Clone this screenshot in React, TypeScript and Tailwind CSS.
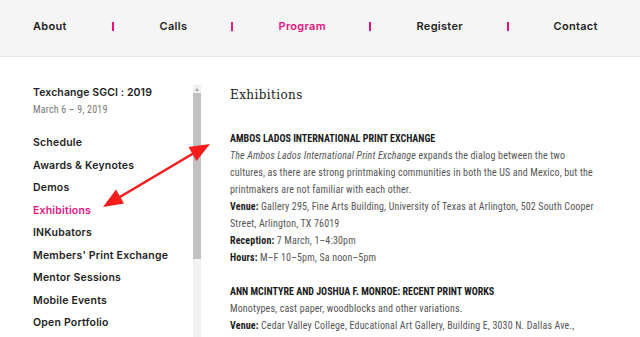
import React from 'react';

const navItems = [
  { label: 'About', active: false },
  { label: 'Calls', active: false },
  { label: 'Program', active: true },
  { label: 'Register', active: false },
  { label: 'Contact', active: false },
];

const sideLinks = [
  'Schedule',
  'Awards & Keynotes',
  'Demos',
  'Exhibitions',
  'INKubators',
  "Members' Print Exchange",
  'Mentor Sessions',
  'Mobile Events',
  'Open Portfolio',
];

const bodyFont = { fontFamily: '"Liberation Sans Narrow", "Roboto Condensed", Roboto, sans-serif' };
const navFont = { fontFamily: 'Inter, "Open Sans", sans-serif' };

function Arrow() {
  return (
    <svg className="pointer-events-none absolute left-0 top-0" width="640" height="337" viewBox="0 0 640 337">
      <line x1="194" y1="153" x2="119" y2="197.5" stroke="#f41c1c" strokeWidth="2.6" />
      <polygon points="210,144 196.5,161 188.5,147" fill="#f41c1c" />
      <polygon points="103,207 124,203.5 116,189.5" fill="#f41c1c" />
    </svg>
  );
}

export default function App() {
  return (
    <div className="relative h-[337px] w-[640px] overflow-hidden bg-white">
      {/* Top navigation */}
      <header className="flex h-[57px] items-start border-b border-[#e6e6e6] bg-[#f5f5f5] pt-[19px]" style={navFont}>
        {navItems.map((item, i) => (
          <React.Fragment key={item.label}>
            {i > 0 && <span className="mt-[3px] h-[9px] w-[1.5px] bg-[#e8137f]" />}
            <div
              className={`text-[11px] font-semibold leading-[14px] tracking-[0.3px] ${
                item.active ? 'text-[#e8137f]' : 'text-[#1e1e1e]'
              } ${
                i === 0 ? 'w-[112px] pl-[33px]' : i === 1 ? 'w-[117.5px] pl-[46px]' : i === 4 ? 'w-[131px] pl-[45px]' : 'w-[136.5px] pl-[46px]'
              }`}
            >
              {item.label}
            </div>
          </React.Fragment>
        ))}
      </header>

      <div className="flex">
        {/* Sidebar */}
        <aside className="w-[193px] shrink-0 pl-[33px] pt-[28px]" style={navFont}>
          <h2 className="text-[10.5px] font-semibold leading-[16px] tracking-[0.1px] text-[#1e1e1e]">Texchange SGCI : 2019</h2>
          <p className="mt-[2px] text-[10px] leading-[14px] tracking-[0.2px] text-[#777]" style={bodyFont}>
            March 6 – 9, 2019
          </p>
          <ul className="mt-[15px]">
            {sideLinks.map((l) => (
              <li
                key={l}
                className={`text-[10.5px] font-semibold leading-[22.5px] tracking-[0.2px] ${
                  l === 'Exhibitions' ? 'text-[#e8137f]' : 'text-[#1e1e1e]'
                }`}
              >
                {l}
              </li>
            ))}
          </ul>
        </aside>

        {/* Scrollbar */}
        <div className="mt-[28px] flex h-[260px] w-[8px] shrink-0 flex-col bg-[#f1f1f1]">
          <div className="flex h-[8px] items-center justify-center">
            <span className="h-0 w-0 border-x-[2.5px] border-b-[3px] border-x-transparent border-b-[#a3a3a3]" />
          </div>
          <div className="h-[166px] bg-[#c1c1c1]" />
        </div>

        {/* Main content */}
        <main className="pl-[29px] pt-[28px] text-[#555]">
          <h1 className="text-[12px] leading-[20px] tracking-[0.4px] text-[#222]" style={{ fontFamily: '"DejaVu Serif", "Liberation Serif", serif' }}>
            Exhibitions
          </h1>

          <section className="mt-[24.5px] whitespace-nowrap text-[10px] leading-[17px] tracking-[0.15px]" style={bodyFont}>
            <h3 className="font-bold tracking-[0px] text-[#1a1a1a]">AMBOS LADOS INTERNATIONAL PRINT EXCHANGE</h3>
            <p>
              <em>The Ambos Lados International Print Exchange</em> expands the dialog between the two
              <br />
              cultures, as there are strong printmaking communities in both the US and Mexico, but the
              <br />
              printmakers are not familiar with each other.
            </p>
            <p>
              <b className="text-[#1a1a1a]">Venue:</b> Gallery 295, Fine Arts Building, University of Texas at Arlington, 502 South Cooper
              <br />
              Street, Arlington, TX 76019
            </p>
            <p>
              <b className="text-[#1a1a1a]">Reception:</b> 7 March, 1–4:30pm
            </p>
            <p>
              <b className="text-[#1a1a1a]">Hours:</b> M–F 10–5pm, Sa noon–5pm
            </p>

            <h3 className="mt-[17px] font-bold tracking-[0px] text-[#1a1a1a]">ANN MCINTYRE AND JOSHUA F. MONROE: RECENT PRINT WORKS</h3>
            <p>Monotypes, cast paper, woodblocks and other variations.</p>
            <p>
              <b className="text-[#1a1a1a]">Venue:</b> Cedar Valley College, Educational Art Gallery, Building E, 3030 N. Dallas Ave.,
            </p>
          </section>
        </main>
      </div>

      <Arrow />
    </div>
  );
}
